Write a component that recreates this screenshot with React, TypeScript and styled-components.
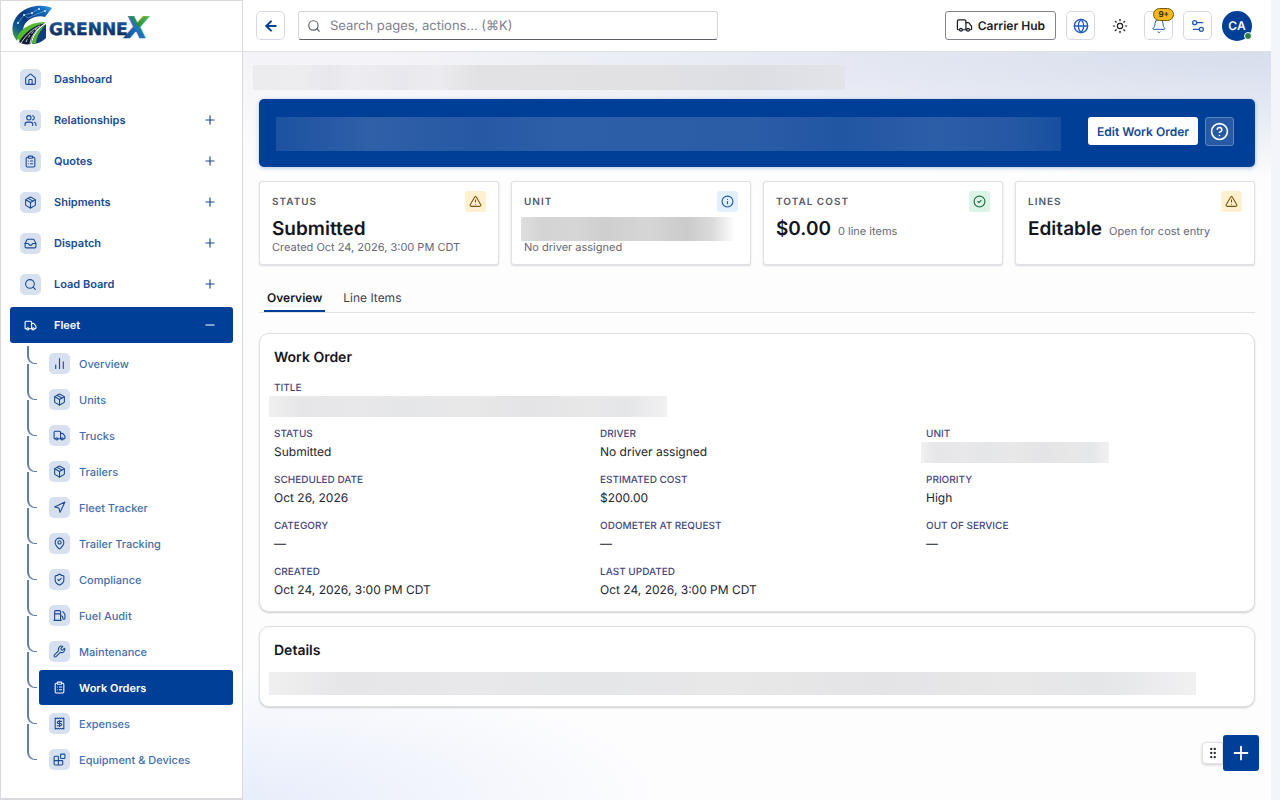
import React from 'react';
import styled, { createGlobalStyle, css } from 'styled-components';
import {
  House, Users, ClipboardList, Package, Inbox, Search, Truck, ChartNoAxesColumn, Navigation, MapPin,
  ShieldCheck, Fuel, Wrench, Receipt, Blocks, Plus, Minus, ArrowLeft, Globe, Sun, Bell,
  Settings2, CircleHelp, TriangleAlert, Info, CircleCheck, GripVertical, type LucideIcon,
} from 'lucide-react';

const brand = '#003f98';
const line = '#e0e1e5';

const GlobalStyle = createGlobalStyle`
  *, *::before, *::after { box-sizing: border-box; }
  body {
    margin: 0;
    background: #f4f5fa;
    color: #14161f;
    font-family: Inter, "Liberation Sans", sans-serif;
    font-size: 13px;
    text-rendering: geometricPrecision;
  }
  button, input { font: inherit; text-rendering: inherit; }
  h1, h2, p, dl, dd, ul { margin: 0; padding: 0; }
  ul { list-style: none; }
`;

const Page = styled.div`
  display: flex;
  min-height: 100vh;
  padding-right: 9px;
`;

const Sidebar = styled.aside`
  flex: 0 0 243px;
  background: #fff;
  border: 1px solid #d9dadd;
  border-bottom-width: 2px;
`;

const Brand = styled.a`
  display: flex;
  height: 51px;
  padding: 3px 0 0 11px;
  border-bottom: 1px solid ${line};
`;

const NavList = styled.ul`
  display: flex;
  flex-direction: column;
  gap: 5px;
  padding: 9px 9px 20px;
`;

const NavButton = styled.button<{ $active?: boolean }>`
  display: flex;
  align-items: center;
  gap: 13px;
  width: 100%;
  height: 36px;
  padding: 0 16px 0 10px;
  border: 0;
  border-radius: 3px;
  background: ${(p) => (p.$active ? brand : 'transparent')};
  color: ${(p) => (p.$active ? '#fff' : '#174a92')};
  font-size: 11px;
  font-weight: 600;
  text-align: left;
`;

const NavLabel = styled.span`
  flex: 1;
`;

const IconTile = styled.span<{ $active?: boolean }>`
  display: grid;
  place-items: center;
  width: 21px;
  height: 21px;
  border-radius: 5px;
  background: ${(p) => (p.$active ? 'transparent' : '#d6e0ef')};
  color: ${(p) => (p.$active ? '#fff' : '#174a92')};
`;

const SubList = styled.ul`
  display: flex;
  flex-direction: column;
  gap: 1px;
  padding: 3px 0 0 29px;
`;

const SubItem = styled.li`
  position: relative;
  &::before {
    content: '';
    position: absolute;
    left: -12px;
    top: -18px;
    width: 10px;
    height: 36px;
    border: solid #64809f;
    border-width: 0 0 1px 2px;
    border-bottom-left-radius: 8px;
  }
  &:first-child::before {
    top: 0;
    height: 18px;
  }
`;

const SubLink = styled.a<{ $active?: boolean }>`
  display: flex;
  align-items: center;
  gap: 9px;
  height: 35px;
  padding-left: 10px;
  border-radius: 3px;
  background: ${(p) => (p.$active ? brand : 'transparent')};
  color: ${(p) => (p.$active ? '#fff' : '#446fae')};
  font-size: 11px;
  font-weight: ${(p) => (p.$active ? 600 : 500)};
  text-decoration: none;
`;

const Main = styled.div`
  flex: 1;
  min-width: 0;
  background:
    radial-gradient(ellipse 900px 130px at 100% 50px, #d6ddec 0%, rgba(214, 221, 236, 0) 100%),
    radial-gradient(ellipse 420px 130px at 0% 100%, #e7edfa 0%, rgba(231, 237, 250, 0) 100%),
    linear-gradient(#f3f3f8 52px, #fdfdfe 170px);
`;

const TopBar = styled.header`
  display: flex;
  align-items: center;
  gap: 10px;
  height: 52px;
  padding: 0 19px 0 13px;
  background: #fff;
  border-bottom: 1px solid ${line};
`;

const SquareButton = styled.button<{ $bare?: boolean }>`
  position: relative;
  display: grid;
  place-items: center;
  width: 29px;
  height: 29px;
  padding: 0;
  border: 1px solid ${(p) => (p.$bare ? 'transparent' : '#d5d9e2')};
  border-radius: 5px;
  background: ${(p) => (p.$bare ? 'transparent' : '#fff')};
  color: ${(p) => (p.$bare ? '#1c1e28' : '#1f5cb8')};
`;

const BackButton = styled(SquareButton)`
  margin-right: 3px;
  color: ${brand};
`;

const SearchBox = styled.label`
  display: flex;
  align-items: center;
  gap: 9px;
  flex: 0 1 420px;
  height: 29px;
  margin-right: auto;
  padding: 0 8px;
  border: 1px solid #d6d8dd;
  border-bottom-color: #5e6068;
  border-radius: 3px;
  color: #5b5f6b;
`;

const SearchInput = styled.input`
  flex: 1;
  min-width: 0;
  padding: 0;
  border: 0;
  outline: 0;
  background: transparent;
  font-size: 13px;
  &::placeholder { color: #7d818d; opacity: 1; }
`;

const HubButton = styled.button`
  display: flex;
  align-items: center;
  gap: 5px;
  height: 29px;
  padding: 0 10px;
  border: 1px solid #80838b;
  border-radius: 3px;
  background: #fff;
  color: #1a1c26;
  font-size: 12px;
  font-weight: 600;
  white-space: nowrap;
`;

const CountBadge = styled.span`
  position: absolute;
  top: -4px;
  right: -2px;
  padding: 0 4px;
  border: 1px solid #7a5a10;
  border-radius: 7px;
  background: #f5b81c;
  color: #3d2a00;
  font-size: 8px;
  font-weight: 700;
  line-height: 11px;
`;

const Avatar = styled.button`
  position: relative;
  width: 30px;
  height: 30px;
  padding: 0;
  border: 0;
  border-radius: 50%;
  background: ${brand};
  color: #fff;
  font-size: 12px;
  font-weight: 600;
`;

const Presence = styled.span`
  position: absolute;
  right: 0;
  bottom: 1px;
  width: 8px;
  height: 8px;
  border: 1px solid #fff;
  border-radius: 50%;
  background: #2d7a4b;
`;

const Content = styled.main`
  display: flex;
  flex-direction: column;
  padding: 13px 16px 20px;
`;

const Masked = styled.div<{ $w: string; $h: number; $tone?: 'brand' | 'crumb' | 'strong' }>`
  width: ${(p) => p.$w};
  height: ${(p) => p.$h}px;
  background: linear-gradient(90deg, #f0f0f1, #e6e6e8 8%, #e8e8ea 22%, #e5e6e8 34%, #e8e8e9 50%, #e4e4e6 66%, #e8e8e9 80%, #e5e6e8 90%, #f1f1f2);
  ${(p) => p.$tone === 'brand' && css`
    background: linear-gradient(90deg, #1c52a1, #2f60a8 12%, #2659a4 26%, #2d5fa8 36%, #2b5da7 60%, #2156a3 72%, #2c5ea8 84%, #2458a4 94%, #174f9f);
  `}
  ${(p) => p.$tone === 'crumb' && css`
    background: linear-gradient(90deg, #ececef, #ededf0 8%, #e7e7ec 13%, #ededf1 17%, #e7e7ed 25%, #ececf0 31%, #e2e2e5 38%, #e1e1e4 70%, #dcdee3 85%, #e2e4e9);
  `}
  ${(p) => p.$tone === 'strong' && css`
    background: linear-gradient(90deg, #dedede, #d4d4d5 10%, #d6d6d6 25%, #cfcfd0 40%, #d6d6d6 60%, #cbcbcc 78%, #dadada 90%, #fbfbfb);
  `}
`;

const CrumbRow = styled.div`
  margin: 0 -6px 9px;
`;

const Banner = styled.section`
  display: flex;
  align-items: flex-start;
  gap: 7px;
  min-height: 68px;
  padding: 18px 21px 16px 17px;
  border-radius: 5px;
  background: ${brand};
  box-shadow: 0 1px 4px rgba(0, 63, 152, 0.3);
`;

const BannerTitle = styled.h1`
  flex: 1;
  margin-right: 20px;
`;

const EditButton = styled.button`
  height: 28px;
  padding: 0 9px;
  border: 0;
  border-radius: 3px;
  background: #fff;
  color: #164a94;
  font-size: 12px;
  font-weight: 600;
`;

const HelpButton = styled(SquareButton)`
  border-color: #5c86c0;
  border-radius: 3px;
  background: #265aa6;
  color: #fff;
`;

const StatGrid = styled.section`
  display: grid;
  grid-template-columns: repeat(4, 1fr);
  gap: 12px;
  margin-top: 14px;
`;

const StatCard = styled.article`
  height: 84px;
  padding: 9px 12px;
  border: 1px solid ${line};
  border-radius: 3px;
  background: #fff;
  box-shadow: 0 1px 2px rgba(20, 22, 31, 0.16);
`;

const StatHead = styled.div`
  display: flex;
  align-items: center;
  justify-content: space-between;
  color: #555864;
  font-size: 10px;
  font-weight: 600;
  letter-spacing: 1px;
`;

const tones = {
  amber: ['#fff1cf', '#80540f'],
  blue: ['#e2f0fd', '#1d55b0'],
  green: ['#dcf4e6', '#1c6b3c'],
};

const StatIcon = styled.span<{ $tone: keyof typeof tones }>`
  display: grid;
  place-items: center;
  width: 21px;
  height: 21px;
  border-radius: 3px;
  background: ${(p) => tones[p.$tone][0]};
  color: ${(p) => tones[p.$tone][1]};
`;

const StatBody = styled.div`
  display: flex;
  flex-wrap: wrap;
  align-items: baseline;
  column-gap: 7px;
  margin-top: 4px;
`;

const StatValue = styled.strong`
  font-size: 19px;
  font-weight: 600;
  line-height: 25px;
`;

const StatMask = styled.div`
  width: 100%;
  margin: 1px 0 0 -3px;
`;

const StatNote = styled.span`
  color: #646773;
  font-size: 11px;
  line-height: 13px;
`;

const Tabs = styled.div`
  display: flex;
  gap: 15px;
  margin-top: 20px;
  padding-left: 5px;
  border-bottom: 1px solid ${line};
`;

const Tab = styled.button<{ $active?: boolean }>`
  height: 27px;
  padding: 0 3px;
  border: 0;
  border-bottom: 2px solid ${(p) => (p.$active ? brand : 'transparent')};
  background: transparent;
  color: ${(p) => (p.$active ? '#14161f' : '#3d404c')};
  font-size: 12px;
  font-weight: ${(p) => (p.$active ? 600 : 400)};
`;

const Panel = styled.section<{ $gap: number }>`
  margin-top: ${(p) => p.$gap}px;
  padding: 14px 14px 11px;
  border: 1px solid ${line};
  border-radius: 10px;
  background: #fff;
  box-shadow: 0 1px 2px rgba(20, 22, 31, 0.2);
`;

const PanelTitle = styled.h2`
  font-size: 14px;
  font-weight: 600;
  line-height: 20px;
`;

const PanelMask = styled.div`
  margin: 11px 0 0 -5px;
`;

const FieldGrid = styled.dl`
  display: grid;
  grid-template-columns: repeat(3, 1fr);
  column-gap: 12px;
  row-gap: 10px;
  margin-top: 12px;
`;

const Field = styled.div<{ $wide?: boolean }>`
  grid-column: ${(p) => (p.$wide ? '1 / -1' : 'auto')};
  height: 36px;
`;

const FieldLabel = styled.dt`
  color: #45477a;
  font-size: 10px;
  font-weight: 500;
  line-height: 16px;
`;

const FieldValue = styled.dd<{ $masked?: boolean }>`
  margin-left: ${(p) => (p.$masked ? '-5px' : '0')};
  color: #23252f;
  font-size: 12px;
  line-height: 20px;
`;

const QuickActions = styled.div`
  position: fixed;
  right: 21px;
  bottom: 29px;
  display: flex;
  align-items: center;
`;

const GripButton = styled.button`
  display: grid;
  place-items: center;
  width: 21px;
  height: 22px;
  padding: 0;
  border: 1px solid ${line};
  border-radius: 4px 0 0 4px;
  background: #fff;
  color: #23252f;
  box-shadow: 0 1px 3px rgba(20, 22, 31, 0.2);
`;

const AddButton = styled.button`
  display: grid;
  place-items: center;
  width: 36px;
  height: 36px;
  padding: 0;
  border: 0;
  border-radius: 3px;
  background: ${brand};
  color: #fff;
`;

const Logo = () => (
  <svg width="140" height="44" viewBox="0 0 140 44" role="img" aria-label="Grennex">
    <defs>
      <linearGradient id="ring" x1="0" y1="1" x2="1" y2="0">
        <stop offset="0" stopColor="#4fb52c" />
        <stop offset="0.25" stopColor="#0e5a8e" />
        <stop offset="0.5" stopColor="#0a3478" />
        <stop offset="0.8" stopColor="#1565b8" />
        <stop offset="1" stopColor="#38a3ea" />
      </linearGradient>
      <linearGradient id="word" x1="0" y1="0" x2="0" y2="1">
        <stop offset="0" stopColor="#1e5a9e" />
        <stop offset="1" stopColor="#0a1f4a" />
      </linearGradient>
      <linearGradient id="ex" x1="0" y1="1" x2="1" y2="0">
        <stop offset="0" stopColor="#0c2f74" />
        <stop offset="0.5" stopColor="#1b74c4" />
        <stop offset="0.6" stopColor="#2c8f3a" />
        <stop offset="1" stopColor="#7cc63c" />
      </linearGradient>
    </defs>
    <path d="M40 4C31 0 17 1 8 9C-1 17-2 29 5 37C6 33 8 30 11 27C11 20 16 15 23 13C27 12 30 12 33 13Z" fill="url(#ring)" />
    <path d="M5 33C9 24 19 18 35 18C25 21 14 27 8 38Z" fill="#55b82f" />
    <path d="M7 38C13 28 21 22 33 19C25 25 20 31 19 40C14 41 10 40 7 38Z" fill="#101d33" />
    <path d="M9 39C15 30 21 25 28 22M18 40C19 32 24 26 31 21" fill="none" stroke="#fff" strokeWidth="0.8" />
    <path d="M14 38C17 31 21 27 26 24" fill="none" stroke="#fff" strokeWidth="0.8" strokeDasharray="3 2" />
    <path d="M20 40C21 32 26 25 34 20V34C31 37 26 40 20 40Z" fill="#123a7c" />
    <path d="M20 40C21 32 26 25 34 20C28 27 25 32 24 39Z" fill="#4fb52c" />
    <path d="M6 19L12 11L20 9L27 5M12 11L16 14L25 10L33 7" fill="none" stroke="#6fc4f5" strokeWidth="0.6" />
    <g fill="#d6f1ff">
      <circle cx="12" cy="11" r="1" /><circle cx="20" cy="9" r="1" /><circle cx="27" cy="5" r="1" /><circle cx="33" cy="7" r="1" /><circle cx="6" cy="19" r="1" />
    </g>
    <text x="37" y="31" fill="url(#word)" stroke="url(#word)" strokeWidth="0.5" fontFamily="DejaVu Sans, sans-serif" fontWeight="700" fontSize="17">GRENNE</text>
    <text x="113" y="34" fill="url(#ex)" stroke="url(#ex)" strokeWidth="0.5" fontFamily="DejaVu Sans, sans-serif" fontWeight="700" fontStyle="italic" fontSize="30">X</text>
  </svg>
);

const nav: [LucideIcon, string][] = [
  [House, 'Dashboard'], [Users, 'Relationships'], [ClipboardList, 'Quotes'], [Package, 'Shipments'],
  [Inbox, 'Dispatch'], [Search, 'Load Board'], [Truck, 'Fleet'],
];

const fleet: [LucideIcon, string][] = [
  [ChartNoAxesColumn, 'Overview'], [Package, 'Units'], [Truck, 'Trucks'], [Package, 'Trailers'],
  [Navigation, 'Fleet Tracker'], [MapPin, 'Trailer Tracking'], [ShieldCheck, 'Compliance'], [Fuel, 'Fuel Audit'],
  [Wrench, 'Maintenance'], [ClipboardList, 'Work Orders'], [Receipt, 'Expenses'], [Blocks, 'Equipment & Devices'],
];

const fields: [string, string][] = [
  ['STATUS', 'Submitted'], ['DRIVER', 'No driver assigned'], ['UNIT', ''],
  ['SCHEDULED DATE', 'Oct 26, 2026'], ['ESTIMATED COST', '$200.00'], ['PRIORITY', 'High'],
  ['CATEGORY', '—'], ['ODOMETER AT REQUEST', '—'], ['OUT OF SERVICE', '—'],
  ['CREATED', 'Oct 24, 2026, 3:00 PM CDT'], ['LAST UPDATED', 'Oct 24, 2026, 3:00 PM CDT'],
];

const stats: { label: string; value?: string; note: string; icon: LucideIcon; tone: keyof typeof tones }[] = [
  { label: 'STATUS', value: 'Submitted', note: 'Created Oct 24, 2026, 3:00 PM CDT', icon: TriangleAlert, tone: 'amber' },
  { label: 'UNIT', note: 'No driver assigned', icon: Info, tone: 'blue' },
  { label: 'TOTAL COST', value: '$0.00', note: '0 line items', icon: CircleCheck, tone: 'green' },
  { label: 'LINES', value: 'Editable', note: 'Open for cost entry', icon: TriangleAlert, tone: 'amber' },
];

export default function App() {
  return (
    <>
      <GlobalStyle />
      <Page>
        <Sidebar>
          <Brand href="#"><Logo /></Brand>
          <nav>
            <NavList>
              {nav.map(([Icon, label]) => {
                const active = label === 'Fleet';
                return (
                  <li key={label}>
                    <NavButton $active={active}>
                      <IconTile $active={active}><Icon size={13} /></IconTile>
                      <NavLabel>{label}</NavLabel>
                      {active ? <Minus size={14} /> : label !== 'Dashboard' && <Plus size={14} />}
                    </NavButton>
                    {active && (
                      <SubList>
                        {fleet.map(([SubIcon, name]) => {
                          const current = name === 'Work Orders';
                          return (
                            <SubItem key={name}>
                              <SubLink href="#" $active={current}>
                                <IconTile $active={current}><SubIcon size={13} /></IconTile>
                                {name}
                              </SubLink>
                            </SubItem>
                          );
                        })}
                      </SubList>
                    )}
                  </li>
                );
              })}
            </NavList>
          </nav>
        </Sidebar>
        <Main>
          <TopBar>
            <BackButton aria-label="Back"><ArrowLeft size={16} strokeWidth={3} /></BackButton>
            <SearchBox>
              <Search size={14} />
              <SearchInput aria-label="Search" placeholder="Search pages, actions... (⌘K)" />
            </SearchBox>
            <HubButton><Truck size={17} strokeWidth={1.75} />Carrier Hub</HubButton>
            <SquareButton aria-label="Language"><Globe size={16} /></SquareButton>
            <SquareButton $bare aria-label="Theme"><Sun size={16} strokeWidth={1.75} /></SquareButton>
            <SquareButton aria-label="Notifications"><Bell size={16} strokeWidth={1.5} /><CountBadge>9+</CountBadge></SquareButton>
            <SquareButton aria-label="Settings"><Settings2 size={16} /></SquareButton>
            <Avatar>CA<Presence /></Avatar>
          </TopBar>
          <Content>
            <CrumbRow><Masked $w="58.7%" $h={25} $tone="crumb" /></CrumbRow>
            <Banner>
              <BannerTitle><Masked $w="100%" $h={34} $tone="brand" /></BannerTitle>
              <EditButton>Edit Work Order</EditButton>
              <HelpButton aria-label="Help"><CircleHelp size={19} /></HelpButton>
            </Banner>
            <StatGrid>
              {stats.map(({ label, value, note, icon: Icon, tone }) => (
                <StatCard key={label}>
                  <StatHead>{label}<StatIcon $tone={tone}><Icon size={13} /></StatIcon></StatHead>
                  <StatBody>
                    {value ? <StatValue>{value}</StatValue> : <StatMask><Masked $w="99%" $h={24} $tone="strong" /></StatMask>}
                    <StatNote>{note}</StatNote>
                  </StatBody>
                </StatCard>
              ))}
            </StatGrid>
            <Tabs role="tablist">
              <Tab role="tab" aria-selected $active>Overview</Tab>
              <Tab role="tab">Line Items</Tab>
            </Tabs>
            <Panel $gap={20}>
              <PanelTitle>Work Order</PanelTitle>
              <FieldGrid>
                <Field $wide>
                  <FieldLabel>TITLE</FieldLabel>
                  <FieldValue $masked><Masked $w="41%" $h={21} /></FieldValue>
                </Field>
                {fields.map(([label, value]) => (
                  <Field key={label}>
                    <FieldLabel>{label}</FieldLabel>
                    {value ? <FieldValue>{value}</FieldValue> : <FieldValue $masked><Masked $w="59%" $h={21} /></FieldValue>}
                  </Field>
                ))}
              </FieldGrid>
            </Panel>
            <Panel $gap={14}>
              <PanelTitle>Details</PanelTitle>
              <PanelMask><Masked $w="95.5%" $h={23} /></PanelMask>
            </Panel>
          </Content>
        </Main>
      </Page>
      <QuickActions>
        <GripButton aria-label="Move"><GripVertical size={14} /></GripButton>
        <AddButton aria-label="Add"><Plus size={22} /></AddButton>
      </QuickActions>
    </>
  );
}
